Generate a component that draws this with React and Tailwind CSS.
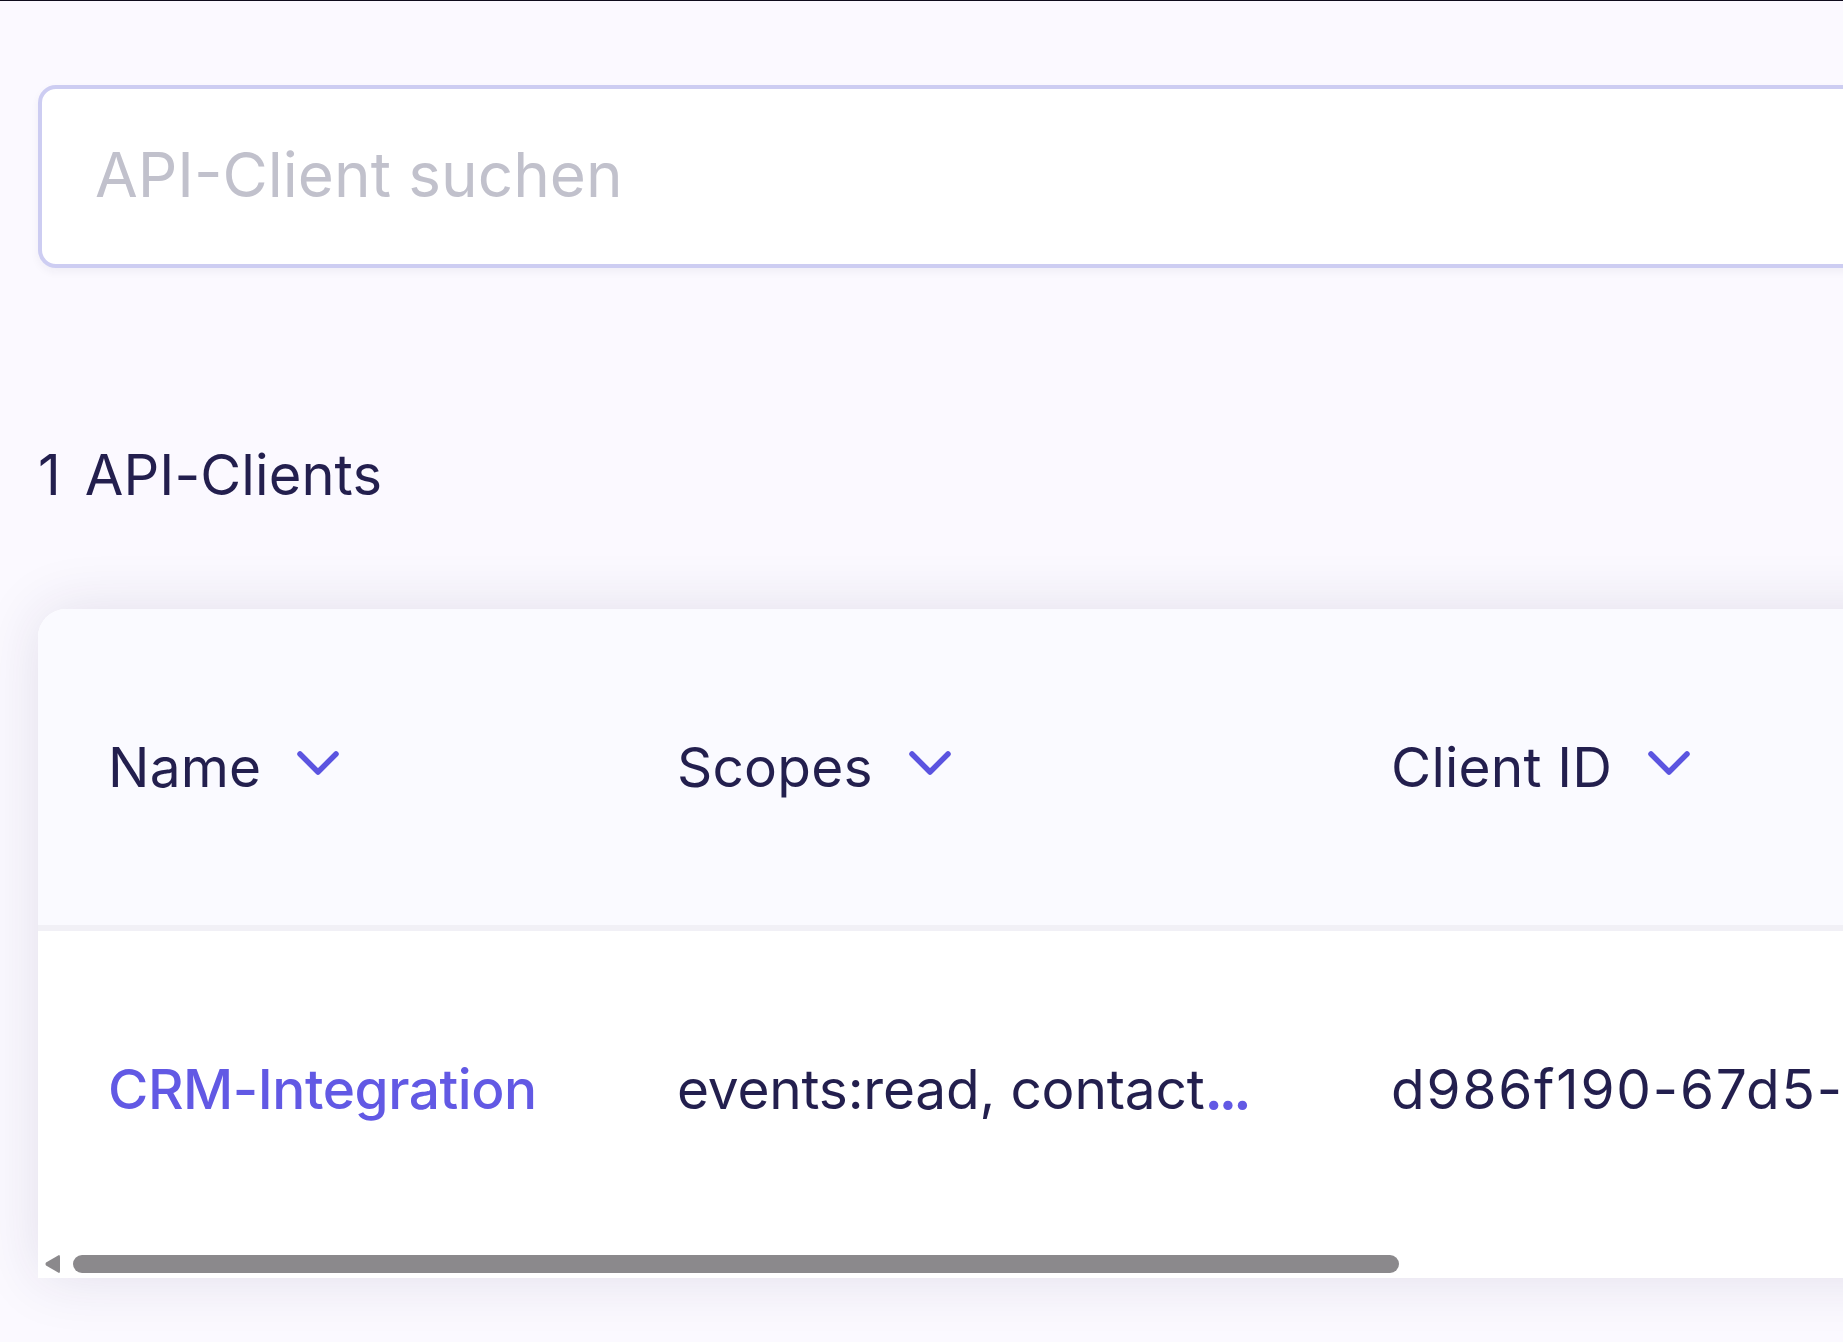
import React from "react";

const font = { fontFamily: '"Inter", "Noto Sans", sans-serif' };

function Chevron() {
  return (
    <svg
      className="ml-[36px] mt-[-8px] h-[26px] w-[42px] shrink-0 text-[#5b54e0]"
      viewBox="0 0 42 26"
      fill="none"
      stroke="currentColor"
      strokeWidth="5.5"
      strokeLinecap="round"
      strokeLinejoin="round"
    >
      <path d="M3 4 L21 22 L39 4" />
    </svg>
  );
}

function HeaderCell({ label, className }) {
  return (
    <div className={`flex shrink-0 items-center ${className}`}>
      <span>{label}</span>
      <Chevron />
    </div>
  );
}

function App() {
  return (
    <div
      className="h-[1342px] w-[1843px] overflow-hidden border-t border-t-[#0f0c1d] bg-[#fbf9ff] pl-[38px] pt-[84px] text-[#231f4e]"
      style={font}
    >
      <input
        className="block h-[183px] w-[2000px] rounded-[18px] border-4 border-[#cdcdf2] bg-white pb-[4px] pl-[53px] text-[62px] shadow-[0_4px_8px_rgba(40,30,80,0.05)] outline-none placeholder:text-[#c1c1cc]"
        placeholder="API-Client suchen"
        readOnly
      />

      <h2 className="mt-[174px] text-[56px] font-normal leading-[66px] tracking-[0.1px] [word-spacing:8px]">1 API-Clients</h2>

      <div className="mt-[101px] w-[2000px] overflow-hidden rounded-tl-[28px] bg-white shadow-[0_0_60px_rgba(40,30,80,0.12)]">
        <div className="flex h-[322px] items-center border-b-[6px] border-b-[#f1f0f6] bg-[#fafaff] pl-[70px] text-[55px] tracking-[0.2px]">
          <HeaderCell label="Name" className="w-[569px]" />
          <HeaderCell label="Scopes" className="w-[714px]" />
          <HeaderCell label="Client ID" />
        </div>

        <div className="flex h-[324px] items-center pb-[8px] pl-[70px] text-[55px]">
          <a className="w-[569px] shrink-0 font-medium tracking-[-0.45px] text-[#6259e4]">CRM-Integration</a>
          <div className="w-[714px] shrink-0 tracking-[-0.2px]">
            events:read, contact<span className="font-bold tracking-[-4px] text-[#6259e4]">...</span>
          </div>
          <div className="shrink-0 tracking-[1.8px]">d986f190-67d5-</div>
        </div>

        <div className="flex h-[23px] items-start pl-[7px]">
          <svg className="h-[18px] w-[15px] shrink-0 text-[#8b898c]" viewBox="0 0 15 18" fill="currentColor">
            <path d="M14 0 Q15 0 15 2 L15 16 Q15 18 14 18 L1 10.5 Q0 9 1 7.5 Z" />
          </svg>
          <div className="ml-[13px] h-[18px] w-[1326px] rounded-full bg-[#8b898c]" />
        </div>
      </div>
    </div>
  );
}

export default App;
